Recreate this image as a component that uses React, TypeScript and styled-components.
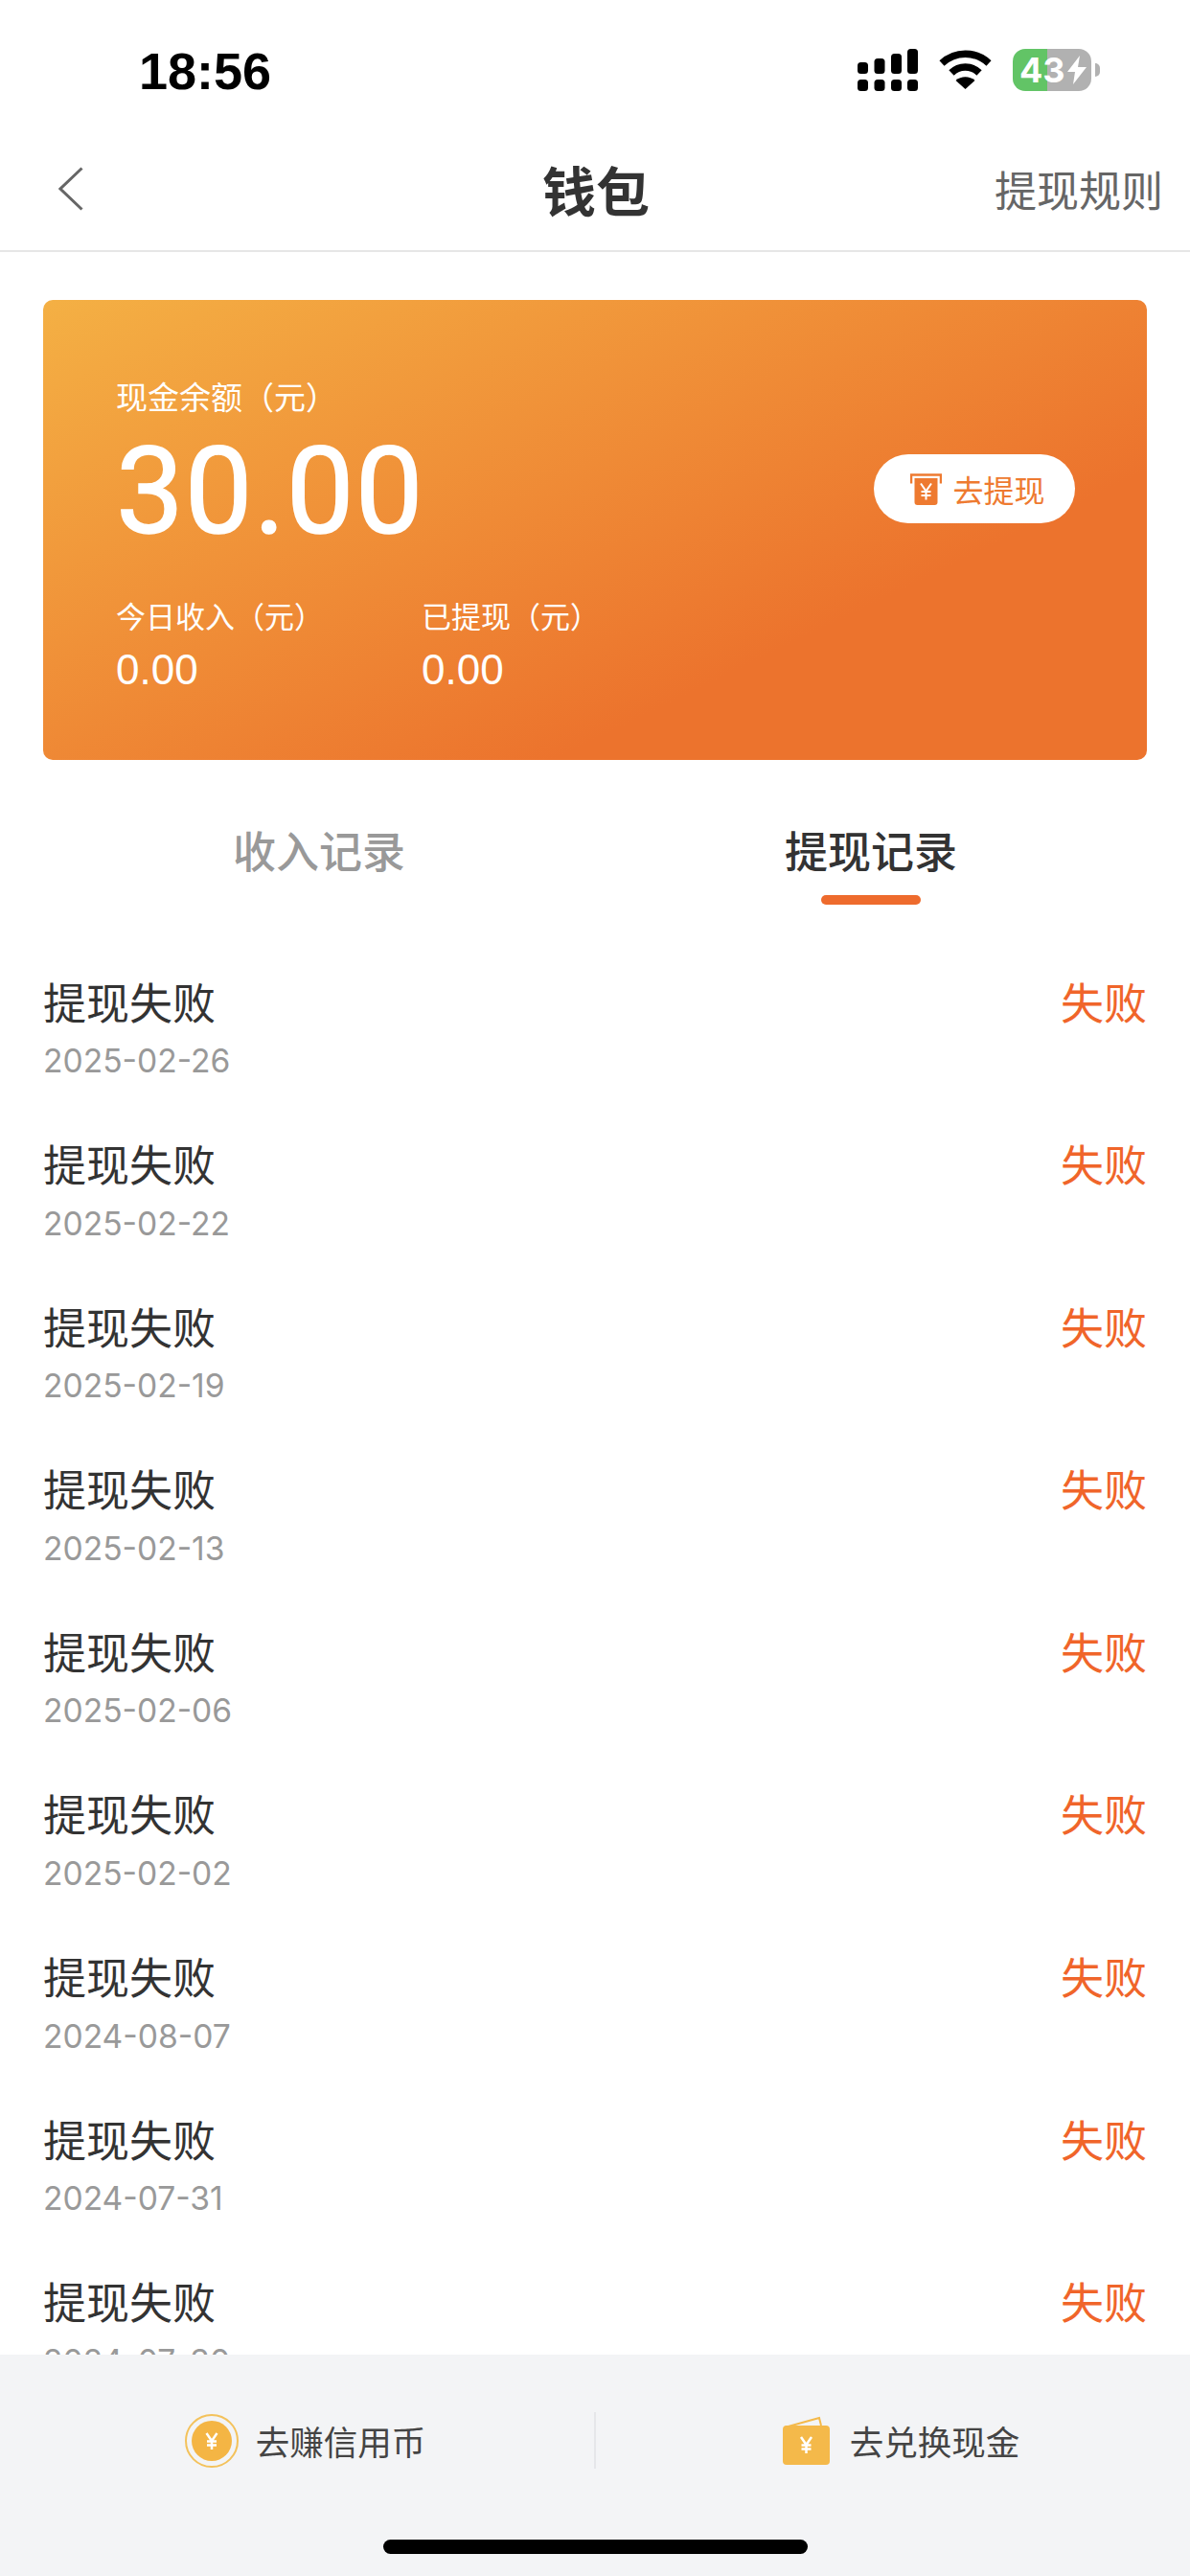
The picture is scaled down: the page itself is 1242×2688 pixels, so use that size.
import styled, { createGlobalStyle } from "styled-components"

const GlobalStyle = createGlobalStyle`
  html, body {
    margin: 0;
    padding: 0;
    background: #fff;
  }
  * {
    box-sizing: border-box;
  }
`

const cjk = `"Noto Sans CJK SC", sans-serif`

const Page = styled.div`
  width: 1242px;
  height: 2688px;
  display: flex;
  flex-direction: column;
  overflow: hidden;
  background: #fff;
  font-family: ${cjk};
`

const StatusBar = styled.div`
  height: 132px;
  flex: none;
  display: flex;
  justify-content: space-between;
  align-items: flex-start;
  padding: 45px 103px 0 145px;
`

const Time = styled.div`
  font-family: "Liberation Sans", sans-serif;
  font-size: 54px;
  line-height: 58px;
  font-weight: 700;
  color: #000;
`

const StatusIcons = styled.div`
  display: flex;
  align-items: flex-start;
  margin-top: 6px;
`

const WifiIcon = styled.svg`
  margin: 1px 22px 0 22px;
`

const Battery = styled.div`
  position: relative;
  width: 82px;
  height: 44px;
  border-radius: 13px;
  padding-left: 7px;
  display: flex;
  align-items: center;
  background: linear-gradient(90deg, #62c466 0 36px, #b1b1b1 36px 100%);
  font-family: Inter, sans-serif;
  font-size: 36px;
  font-weight: 700;
  color: #fff;
  line-height: 44px;

  &::after {
    content: "";
    position: absolute;
    left: 86px;
    top: 15px;
    width: 5px;
    height: 14px;
    border-radius: 0 7px 7px 0;
    background: #b1b1b1;
  }

  svg {
    margin-left: 1px;
  }
`

const Nav = styled.div`
  height: 131px;
  flex: none;
  display: grid;
  grid-template-columns: 1fr auto 1fr;
  align-items: center;
  padding: 0 28px 0 30px;
  border-bottom: 2px solid #e6e6e6;
`

const BackIcon = styled.svg`
  margin-left: 31px;
  display: block;
`

const NavTitle = styled.div`
  font-size: 56px;
  font-weight: 700;
  color: #333;
`

const NavRule = styled.div`
  justify-self: end;
  font-size: 44px;
  color: #666;
`

const Card = styled.div`
  flex: none;
  height: 480px;
  margin: 50px 45px 0;
  padding: 78px 75px 0 76px;
  border-radius: 10px;
  background: linear-gradient(154deg, #f4b044 0%, #ec732d 71%);
  color: #fff;
`

const CardTop = styled.div`
  display: flex;
  justify-content: space-between;
  align-items: flex-end;
`

const Label = styled.div<{ $size: number }>`
  font-size: ${(p) => p.$size}px;
  line-height: 44px;
`

const Amount = styled.div`
  margin-top: 16px;
  font-family: Roboto, sans-serif;
  font-weight: 400;
  font-size: 126px;
  line-height: 124px;
  letter-spacing: 1px;
  -webkit-text-stroke: 1.5px #fff;
`

const WithdrawButton = styled.div`
  width: 210px;
  height: 72px;
  margin-bottom: 29px;
  padding-left: 7px;
  display: flex;
  align-items: center;
  justify-content: center;
  gap: 11px;
  border-radius: 36px;
  background: #fff;
  color: #ee7a30;
  font-size: 32px;
`

const Stats = styled.div`
  display: flex;
  margin-top: 45px;
`

const Stat = styled.div`
  width: 319px;
`

const StatValue = styled.div`
  margin-top: 9px;
  font-family: "Liberation Sans", sans-serif;
  font-size: 44px;
  line-height: 52px;
`

const Tabs = styled.div`
  flex: none;
  height: 167px;
  display: flex;
  padding: 62px 45px 0;
`

const Tab = styled.div<{ $active?: boolean }>`
  flex: 1;
  display: flex;
  flex-direction: column;
  align-items: center;
  font-size: 45px;
  line-height: 64px;
  font-weight: 500;
  color: ${(p) => (p.$active ? "#333" : "#999")};
`

const TabBar = styled.div`
  width: 104px;
  height: 10px;
  margin-top: 15px;
  border-radius: 5px;
  background: #ee6b2d;
`

const List = styled.div`
  flex: 1;
  min-height: 0;
  overflow: hidden;
`

const Row = styled.div`
  height: 169.6px;
  padding: 54.500px 45px 0;
  display: flex;
  justify-content: space-between;
  align-items: flex-start;
`

const RowTitle = styled.div`
  font-size: 45px;
  line-height: 60px;
  color: #333;
`

const RowDate = styled.div`
  margin-top: 10.500px;
  font-family: Inter, sans-serif;
  font-size: 33.600px;
  line-height: 44px;
  color: #999;
`

const RowStatus = styled.div`
  font-size: 45px;
  line-height: 60px;
  color: #f0652a;
`

const Footer = styled.div`
  flex: none;
  height: 231px;
  padding-top: 60px;
  display: flex;
  flex-direction: column;
  align-items: center;
  background: #f3f4f6;
`

const FooterActions = styled.div`
  width: 100%;
  height: 59px;
  display: flex;
  align-items: center;
`

const FooterAction = styled.div<{ $gap: number }>`
  flex: 1;
  padding-left: 17px;
  display: flex;
  align-items: center;
  justify-content: center;
  gap: ${(p) => p.$gap}px;
  font-size: 35.500px;
  color: #444;
`

const Divider = styled.div`
  width: 2px;
  height: 59px;
  background: #e6e7ea;
`

const HomeBar = styled.div`
  width: 443px;
  height: 15px;
  margin-top: 74px;
  border-radius: 8px;
  background: #000;
`

const dates = [
  "2025-02-26",
  "2025-02-22",
  "2025-02-19",
  "2025-02-13",
  "2025-02-06",
  "2025-02-02",
  "2024-08-07",
  "2024-07-31",
  "2024-07-30",
]

const SignalIcon = () => (
  <svg width="63" height="44" viewBox="0 0 63 44" fill="#000">
    <rect x="0" y="14" width="11" height="12" rx="3.5" />
    <rect x="17.5" y="10" width="11" height="16" rx="3.5" />
    <rect x="35" y="5" width="11" height="21" rx="3.5" />
    <rect x="52" y="0" width="11" height="26" rx="3.5" />
    <rect x="0" y="32" width="11" height="12" rx="3.5" />
    <rect x="17.5" y="32" width="11" height="12" rx="3.5" />
    <rect x="35" y="32" width="11" height="12" rx="3.5" />
    <rect x="52" y="32" width="11" height="12" rx="3.5" />
  </svg>
)

const Yen = ({ color, width }: { color: string; width: number }) => (
  <g fill="none" stroke={color} strokeWidth={width}>
    <path d="M-5.5 -8 L0 0 L5.5 -8 M0 0 V9 M-5 0.5 H5 M-5 4.5 H5" />
  </g>
)

const App = () => {
  return (
    <Page>
      <GlobalStyle />
      <StatusBar>
        <Time>18:56</Time>
        <StatusIcons>
          <SignalIcon />
          <WifiIcon width="55" height="41" viewBox="0 0 55 41" fill="none">
            <path d="M3 14 C17 1 38 1 52 14" stroke="#000" strokeWidth="7.5" />
            <path d="M13 24 C21 16 34 16 42 24" stroke="#000" strokeWidth="7.5" />
            <path d="M17.5 32 C23 27 32 27 37.500 32 L27.500 41 Z" fill="#000" />
          </WifiIcon>
          <Battery>
            43
            <svg width="22" height="30" viewBox="0 0 22 30" fill="#fff">
              <path d="M14 0 L1 17 H9 L7 30 L21 12 H12 Z" />
            </svg>
          </Battery>
        </StatusIcons>
      </StatusBar>
      <Nav>
        <BackIcon width="26" height="46" viewBox="0 0 26 46" fill="none">
          <path d="M24.500 1.500 L2 23 L24.500 44.500" stroke="#666" strokeWidth="3" />
        </BackIcon>
        <NavTitle>钱包</NavTitle>
        <NavRule>提现规则</NavRule>
      </Nav>
      <Card>
        <CardTop>
          <div>
            <Label $size={33}>现金余额（元）</Label>
            <Amount>30.00</Amount>
          </div>
          <WithdrawButton>
            <svg width="33" height="33" viewBox="-16.500 -16.500 33 33">
              <path
                d="M-15.500 -6 V-15 H15.500 V-6"
                fill="none"
                stroke="#ee7a30"
                strokeWidth="2.500"
              />
              <path
                d="M-12 -11.500 H12 V13.500 Q12 16.500 9 16.500 H-9 Q-12 16.500 -12 13.500 Z"
                fill="#ee7a30"
              />
              <g transform="translate(0 2)">
                <Yen color="#fff" width={2} />
              </g>
            </svg>
            去提现
          </WithdrawButton>
        </CardTop>
        <Stats>
          <Stat>
            <Label $size={31}>今日收入（元）</Label>
            <StatValue>0.00</StatValue>
          </Stat>
          <Stat>
            <Label $size={31}>已提现（元）</Label>
            <StatValue>0.00</StatValue>
          </Stat>
        </Stats>
      </Card>
      <Tabs>
        <Tab>收入记录</Tab>
        <Tab $active>
          提现记录
          <TabBar />
        </Tab>
      </Tabs>
      <List>
        {dates.map((date) => (
          <Row key={date}>
            <div>
              <RowTitle>提现失败</RowTitle>
              <RowDate>{date}</RowDate>
            </div>
            <RowStatus>失败</RowStatus>
          </Row>
        ))}
      </List>
      <Footer>
        <FooterActions>
          <FooterAction $gap={18}>
            <svg width="56" height="56" viewBox="-28 -28 56 56">
              <circle r="27" fill="none" stroke="#f3c25c" strokeWidth="2" />
              <circle r="21" fill="#f4b544" />
              <Yen color="#fff" width={2.500} />
            </svg>
            去赚信用币
          </FooterAction>
          <Divider />
          <FooterAction $gap={21}>
            <svg width="49" height="51" viewBox="0 0 49 51">
              <path
                d="M2 12 L38 2 L40 10"
                fill="none"
                stroke="#f4b94a"
                strokeWidth="2"
              />
              <rect x="0" y="10" width="49" height="41" rx="4" fill="#f4b94a" />
              <g transform="translate(24.500 30)">
                <Yen color="#fff" width={2.500} />
              </g>
            </svg>
            去兑换现金
          </FooterAction>
        </FooterActions>
        <HomeBar />
      </Footer>
    </Page>
  )
}

export default App
